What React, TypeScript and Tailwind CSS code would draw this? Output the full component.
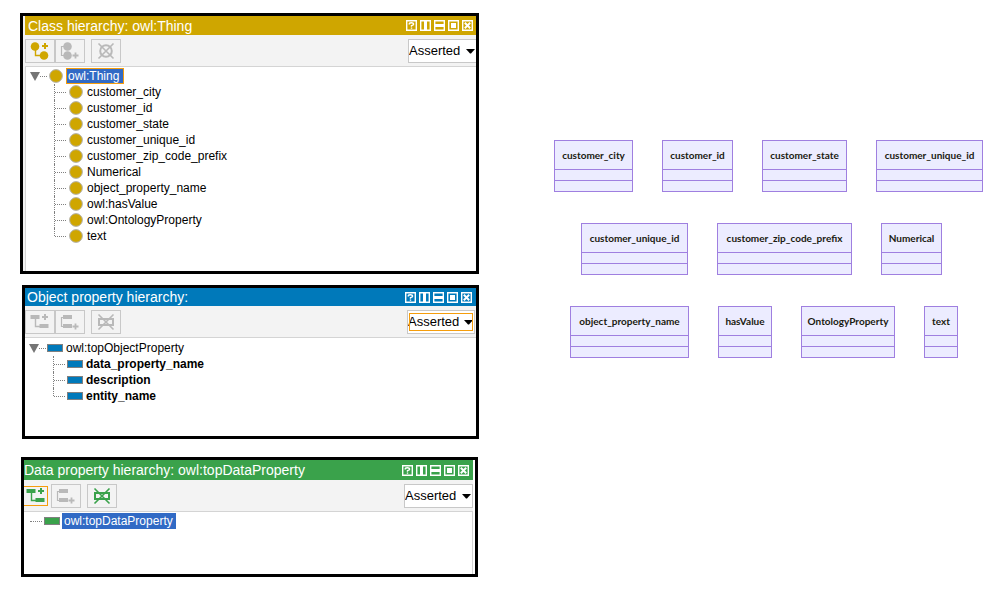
import React from "react";

type Kind = "class" | "object" | "data";

const tone: Record<Kind, { bar: string; fill: string }> = {
  class: { bar: "bg-[#cfa600]", fill: "#cfa600" },
  object: { bar: "bg-[#0079ba]", fill: "#0079ba" },
  data: { bar: "bg-[#3aa24b]", fill: "#3aa24b" },
};

const windowGlyphs = [
  {
    label: "Help",
    shape: (
      <path
        d="M3.2 4.4Q3.2 2.8 5.4 2.8T7.6 4.3Q7.6 5.3 5.5 5.6V6.7M5.5 7.4v1.4"
        fill="none"
        stroke="#fff"
        strokeWidth="1.4"
      />
    ),
  },
  { label: "Split vertically", shape: <path d="M4 1h3v9H4z" fill="#fff" /> },
  { label: "Split horizontally", shape: <path d="M1 4h9v3H1z" fill="#fff" /> },
  { label: "Float", shape: <path d="M3 3h5v5H3z" fill="#fff" /> },
  {
    label: "Close",
    shape: <path d="M2.8 2.8l5.4 5.4M8.2 2.8L2.8 8.2" stroke="#fff" strokeWidth="2" />,
  },
];

function TitleBar({ kind, title, className }: { kind: Kind; title: string; className: string }) {
  return (
    <header className={`flex items-center justify-between text-white ${tone[kind].bar} ${className}`}>
      <h2 className="text-[14px] leading-[18px] whitespace-nowrap">{title}</h2>
      <div className="flex gap-[3px]">
        {windowGlyphs.map((g) => (
          <button key={g.label} type="button" aria-label={g.label} className="block">
            <svg width="11" height="11" viewBox="0 0 11 11" className="block">
              <path d="M0 0h11v11H0zM1.4 1.4v8.2h8.2V1.4z" fill="#fff" fillRule="evenodd" />
              {g.shape}
            </svg>
          </button>
        ))}
      </div>
    </header>
  );
}

function NodeShape({ kind, x, y, color }: { kind: Kind; x: number; y: number; color: string }) {
  return kind === "class" ? (
    <circle cx={x + 4.5} cy={y + 2.5} r="4.3" fill={color} />
  ) : (
    <rect x={x} y={y} width="9" height="4" fill={color} />
  );
}

function AddChildIcon({ kind, color }: { kind: Kind; color: string }) {
  return (
    <svg width="20" height="18" viewBox="0 0 20 18" className="block">
      <NodeShape kind={kind} x={0.5} y={2} color={color} />
      <NodeShape kind={kind} x={9.5} y={11} color={color} />
      <path d="M5.5 6v7.5h5" fill="none" stroke={color} strokeWidth="1.4" />
      <path d="M12 4h6M15 1v6" stroke={color} strokeWidth="2" />
    </svg>
  );
}

function AddSiblingIcon({ kind }: { kind: Kind }) {
  return (
    <svg width="20" height="18" viewBox="0 0 20 18" className="block">
      <NodeShape kind={kind} x={3} y={2} color="#b9b9b9" />
      <NodeShape kind={kind} x={3} y={11} color="#b9b9b9" />
      <path d="M4 4.5H1.5v9H4" fill="none" stroke="#b9b9b9" strokeWidth="1.2" />
      <path d="M12.5 13.5h6M15.5 10.5v6" stroke="#b9b9b9" strokeWidth="1.8" />
    </svg>
  );
}

function DeleteIcon({ kind, color }: { kind: Kind; color: string }) {
  return (
    <svg width="20" height="18" viewBox="0 0 20 18" className="block">
      {kind === "class" ? (
        <circle cx="10" cy="9" r="5.8" fill="none" stroke={color} strokeWidth="2" />
      ) : (
        <rect x="3" y="6" width="14" height="6" fill="none" stroke={color} strokeWidth="2" />
      )}
      <path d="M2.5 1.5l15 15M17.5 1.5l-15 15" stroke={color} strokeWidth="1.6" />
    </svg>
  );
}

function ToolButton({
  label,
  className = "h-6 w-[30px] border-[#c8c8c8]",
  children,
}: {
  label: string;
  className?: string;
  children: React.ReactNode;
}) {
  return (
    <button
      type="button"
      aria-label={label}
      className={`flex items-center justify-center border ${className}`}
    >
      {children}
    </button>
  );
}

function ModeSelect({ focused = false, className }: { focused?: boolean; className: string }) {
  return (
    <div className={`relative h-6 border border-[#c8c8c8] bg-white ${className}`}>
      <select
        aria-label="Hierarchy mode"
        className="block h-full w-full appearance-none bg-transparent text-[13px] leading-[18px] text-black outline-none"
      >
        <option>Asserted</option>
        <option>Inferred</option>
      </select>
      <svg
        width="9"
        height="5"
        viewBox="0 0 9 5"
        className="pointer-events-none absolute top-[9px] right-px"
      >
        <path d="M0 0h9L5 4.5H4z" fill="#000" />
      </svg>
      {focused && (
        <span className="pointer-events-none absolute inset-x-px inset-y-[2px] border border-[#f59d0c]" />
      )}
    </div>
  );
}

function Marker({ kind }: { kind: Kind }) {
  return kind === "class" ? (
    <svg width="14" height="14" viewBox="0 0 14 14" className="block">
      <circle cx="7" cy="7" r="6.4" fill={tone.class.fill} stroke="#b3b3b3" strokeWidth="1" />
    </svg>
  ) : (
    <svg width="16" height="8" viewBox="0 0 16 8" className="block">
      <rect x="0.5" y="0.5" width="15" height="7" fill={tone[kind].fill} stroke="#808080" />
    </svg>
  );
}

function RootRow({
  kind,
  label,
  expandable = true,
  stemClass,
  labelClass,
}: {
  kind: Kind;
  label: string;
  expandable?: boolean;
  stemClass: string;
  labelClass: string;
}) {
  return (
    <div className="flex h-4 items-center">
      {expandable && (
        <svg width="10" height="9" viewBox="0 0 10 9" className="block">
          <path d="M0 0h10L5 9z" fill="#757575" />
        </svg>
      )}
      <span className={`border-t border-dotted border-[#808080] ${stemClass}`} />
      <Marker kind={kind} />
      <span className={`text-[12px] ${labelClass}`}>{label}</span>
    </div>
  );
}

function Children({
  kind,
  items,
  stemClass,
  labelClass,
}: {
  kind: Kind;
  items: string[];
  stemClass: string;
  labelClass: string;
}) {
  return (
    <ul className="pl-6">
      {items.map((item) => (
        <li key={item} className="group flex h-4 items-center">
          <span className="h-4 self-start border-l border-dotted border-[#808080] group-last:h-2" />
          <span className={`w-[11px] border-t border-dotted border-[#808080] ${stemClass}`} />
          <Marker kind={kind} />
          <span className={`text-[12px] leading-4 ${labelClass}`}>{item}</span>
        </li>
      ))}
    </ul>
  );
}

const classes = [
  "customer_city",
  "customer_id",
  "customer_state",
  "customer_unique_id",
  "customer_zip_code_prefix",
  "Numerical",
  "object_property_name",
  "owl:hasValue",
  "owl:OntologyProperty",
  "text",
];

const diagram = [
  {
    pad: "pl-[6px]",
    nodes: [
      { name: "customer_city", width: "w-[79px]" },
      { name: "customer_id", width: "w-[71px]" },
      { name: "customer_state", width: "w-[85px]" },
      { name: "customer_unique_id", width: "w-[107px]" },
    ],
  },
  {
    pad: "pl-[33px]",
    nodes: [
      { name: "customer_unique_id", width: "w-[107px]" },
      { name: "customer_zip_code_prefix", width: "w-[135px]" },
      { name: "Numerical", width: "w-[61px]" },
    ],
  },
  {
    pad: "pl-[22px]",
    nodes: [
      { name: "object_property_name", width: "w-[119px]" },
      { name: "hasValue", width: "w-[54px]" },
      { name: "OntologyProperty", width: "w-[94px]" },
      { name: "text", width: "w-[34px]" },
    ],
  },
];

export default function App() {
  return (
    <main className="grid min-h-screen grid-cols-[479fr_523fr] bg-white font-['Liberation_Sans',Arial,sans-serif] text-black">
      <div className="flex flex-col pt-[13px] pl-5">
        <section className="border-[3px] border-black bg-[#f3f3f3] pl-0.5">
          <TitleBar kind="class" title="Class hierarchy: owl:Thing" className="h-[19px] pr-[3px] pl-[3px]" />
          <div className="flex h-[31px] items-center">
            <ToolButton label="Add subclass">
              <AddChildIcon kind="class" color="#cfa600" />
            </ToolButton>
            <ToolButton label="Add sibling class">
              <AddSiblingIcon kind="class" />
            </ToolButton>
            <ToolButton label="Delete class" className="ml-1.5 h-6 w-[30px] border-[#c8c8c8]">
              <DeleteIcon kind="class" color="#b9b9b9" />
            </ToolButton>
            <ModeSelect className="ml-auto w-[68px] border-r-0" />
          </div>
          <div className="border-t border-l border-[#d4d4d4] bg-white pt-px pb-[27px] pl-1">
            <RootRow
              kind="class"
              label="owl:Thing"
              stemClass="mr-0.5 w-[7px]"
              labelClass="ml-[3px] border border-[#f59d0c] bg-[#316ac5] pr-1 pl-px leading-[14px] text-white"
            />
            <Children kind="class" items={classes} stemClass="mr-[3px]" labelClass="pl-1" />
          </div>
        </section>

        <section className="mt-[11px] ml-0.5 border-[3px] border-black bg-[#f3f3f3]">
          <TitleBar kind="object" title="Object property hierarchy:" className="h-[18px] pr-1 pl-[2px]" />
          <div className="flex h-[31px] items-center">
            <ToolButton label="Add sub property">
              <AddChildIcon kind="object" color="#b9b9b9" />
            </ToolButton>
            <ToolButton label="Add sibling property">
              <AddSiblingIcon kind="object" />
            </ToolButton>
            <ToolButton label="Delete property" className="ml-1.5 h-6 w-[30px] border-[#c8c8c8]">
              <DeleteIcon kind="object" color="#b9b9b9" />
            </ToolButton>
            <ModeSelect focused className="mr-px ml-auto w-[68px]" />
          </div>
          <div className="border-t border-[#d4d4d4] bg-white pt-0.5 pb-8 pl-1">
            <RootRow
              kind="object"
              label="owl:topObjectProperty"
              stemClass="mr-px w-[7px]"
              labelClass="pl-[3px] leading-4"
            />
            <Children
              kind="object"
              items={["data_property_name", "description", "entity_name"]}
              stemClass="mr-0.5"
              labelClass="pl-[3px] font-bold"
            />
          </div>
        </section>

        <section className="mt-[18px] mr-px ml-px border-[3px] border-black bg-white pr-0.5">
          <TitleBar
            kind="data"
            title="Data property hierarchy: owl:topDataProperty"
            className="h-5 pr-1"
          />
          <div className="flex h-[31px] items-center bg-[#f3f3f3]">
            <ToolButton label="Add sub property" className="h-5 w-6 border-l-0 border-[#f59d0c]">
              <AddChildIcon kind="data" color="#3aa24b" />
            </ToolButton>
            <ToolButton label="Add sibling property" className="ml-[3px] h-6 w-[30px] border-[#c8c8c8]">
              <AddSiblingIcon kind="data" />
            </ToolButton>
            <ToolButton label="Delete property" className="ml-1.5 h-6 w-[30px] border-[#c8c8c8]">
              <DeleteIcon kind="data" color="#3aa24b" />
            </ToolButton>
            <ModeSelect className="ml-auto w-[69px]" />
          </div>
          <div className="border-t border-r border-[#d4d4d4] bg-white pt-px pb-[45px] pl-1.5">
            <RootRow
              kind="data"
              label="owl:topDataProperty"
              expandable={false}
              stemClass="mr-0.5 w-3"
              labelClass="ml-0.5 bg-[#316ac5] pr-[3px] pl-0.5 leading-4 text-white"
            />
          </div>
        </section>
      </div>

      <div className="flex flex-col gap-[31px] pt-[140px] pl-[69px] font-['Lato','Noto_Sans',sans-serif]">
        {diagram.map((row) => (
          <div key={row.pad} className={`flex gap-[29px] ${row.pad}`}>
            {row.nodes.map((node) => (
              <article
                key={node.name}
                className={`shrink-0 border border-[#9f7fe0] bg-[#ececff] ${node.width}`}
              >
                <h3 className="flex h-7 items-center justify-center text-[10px] leading-4 font-bold whitespace-nowrap text-[#1a1a10]">
                  {node.name}
                </h3>
                <div className="h-[11px] border-t border-[#9f7fe0]" />
                <div className="h-[11px] border-t border-[#9f7fe0]" />
              </article>
            ))}
          </div>
        ))}
      </div>
    </main>
  );
}
